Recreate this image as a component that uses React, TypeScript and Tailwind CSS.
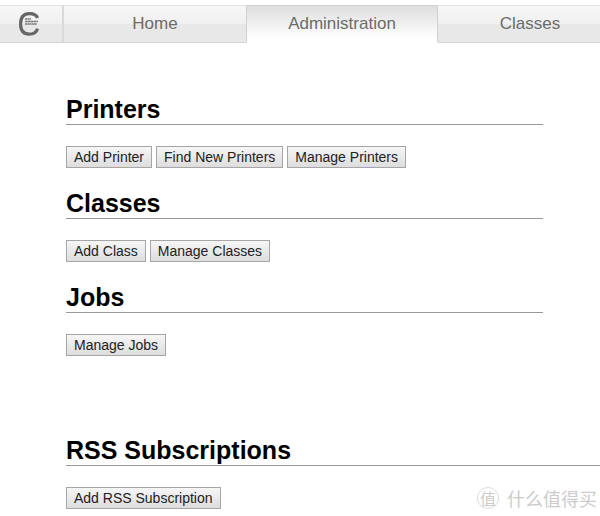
import type { ReactNode } from "react";
import clsx from "clsx";

const tabs = [
  { name: "Home", width: "w-[182px]" },
  { name: "Administration", width: "w-[192px]", active: true },
  { name: "Classes", width: "w-[184px]" },
];

const sections = [
  {
    title: "Printers",
    actions: ["Add Printer", "Find New Printers", "Manage Printers"],
  },
  { title: "Classes", actions: ["Add Class", "Manage Classes"] },
  { title: "Jobs", actions: ["Manage Jobs"] },
];

function CupsLogo() {
  return (
    <svg width="22" height="26" viewBox="0 0 22 26" aria-label="CUPS" role="img">
      <path
        d="M19.5 7C18.5 3.8 15.8 2.6 11.3 2.6C5.2 2.6 2.6 6.5 2.6 13C2.6 19.5 5.2 23.2 11.3 23.2C15.8 23.2 18.5 21.3 19.5 17.6"
        fill="none"
        stroke="#666666"
        strokeWidth="3.2"
      />
      <g stroke="#777777" strokeWidth="1.4">
        <path d="M7 8h6" strokeDasharray="2 0.3" />
        <path d="M7 10.5h13" strokeDasharray="2.6 0.3" />
        <path d="M7 13h12" strokeDasharray="2 0.3" />
      </g>
    </svg>
  );
}

function NavBar() {
  return (
    <nav className="flex h-[38px] overflow-hidden bg-linear-to-b from-[#f7f7f7] from-0% via-[#f0f0f0] via-50% to-[#e8e8e8] to-50% text-[17px] text-[#6b6b6b]">
      <a
        href="#cups"
        className="flex w-16 shrink-0 items-center border-y border-r-2 border-t-[#e2e2e2] border-r-[#d9d9d9] border-b-[#d4d4d4] pl-[18px]"
      >
        <CupsLogo />
      </a>
      {tabs.map((tab) => (
        <a
          key={tab.name}
          href={`#${tab.name.toLowerCase()}`}
          className={clsx(
            "flex shrink-0 items-center justify-center border-y",
            tab.width,
            tab.active
              ? "border-x border-x-[#d0d0d0] border-t-[#d0d0d0] border-b-white bg-linear-to-b from-[#dedede] to-white to-90%"
              : "border-t-[#e2e2e2] border-b-[#d4d4d4]"
          )}
        >
          {tab.name}
        </a>
      ))}
      <span className="grow border-y border-t-[#e2e2e2] border-b-[#d4d4d4]" />
    </nav>
  );
}

function Heading({ children }: { children: ReactNode }) {
  return (
    <h2 className="border-b border-[#999999] text-[25px] leading-[30px] font-bold text-black">
      {children}
    </h2>
  );
}

function Actions({ names }: { names: string[] }) {
  return (
    <div className="mt-[21px] flex flex-wrap gap-1">
      {names.map((name) => (
        <button
          key={name}
          type="button"
          className="h-[22px] border border-[#a6a6a6] bg-linear-to-b from-[#f6f6f6] to-[#dddddd] px-[7px] text-sm leading-5 whitespace-nowrap text-[#222222]"
        >
          {name}
        </button>
      ))}
    </div>
  );
}

export default function App() {
  return (
    <div className="relative overflow-hidden bg-white pt-[5px] pb-[7px] font-['Liberation_Sans',Arial,sans-serif]">
      <NavBar />

      <main className="pt-[51px] pl-[66px]">
        <div className="mr-[57px] space-y-5">
          {sections.map((section) => (
            <section key={section.title}>
              <Heading>{section.title}</Heading>
              <Actions names={section.actions} />
            </section>
          ))}
        </div>

        <section className="mt-[79px]">
          <Heading>RSS Subscriptions</Heading>
          <Actions names={["Add RSS Subscription"]} />
        </section>
      </main>

      <div className="absolute right-[3px] bottom-[6px] flex items-center gap-2 font-['Noto_Sans_CJK_SC',sans-serif] text-[#cccccc]">
        <span className="flex size-[22px] items-center justify-center rounded-full border border-[#dddddd] text-base leading-5">
          值
        </span>
        <span className="text-lg leading-6">什么值得买</span>
      </div>
    </div>
  );
}
